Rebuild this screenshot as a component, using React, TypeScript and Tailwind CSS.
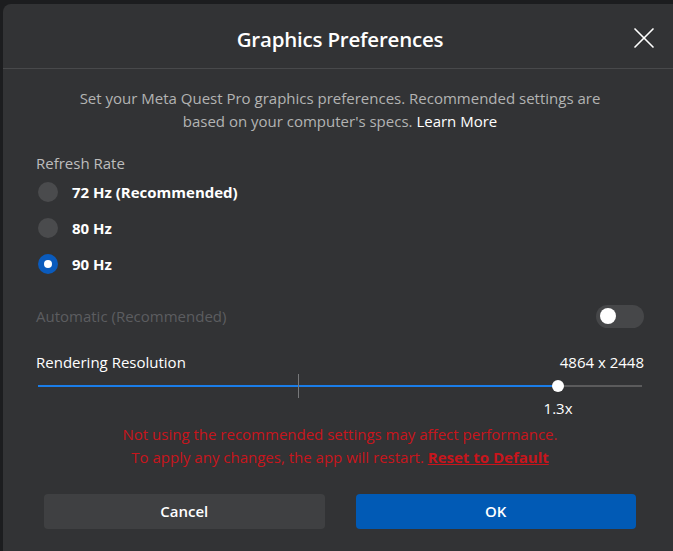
import { X } from "lucide-react";

const RATES = [
  { key: "72", label: "72 Hz (Recommended)" },
  { key: "80", label: "80 Hz" },
  { key: "90", label: "90 Hz" },
];

const font = { fontFamily: '"Open Sans", "Noto Sans", sans-serif' };

export default function App() {
  const selected = "90";
  const value = 0.861; // slider position
  const tick = 0.43;

  return (
    <div className="w-[673px] h-[551px] overflow-hidden bg-[#1c1d1f]" style={font}>
      <div className="ml-[3px] mt-[4px] w-[674px] h-[547px] rounded-tl-lg bg-[#323335] flex flex-col">
        {/* HEADER */}
        <div className="h-[65px] grid grid-cols-[1fr_auto_1fr] items-center border-b border-[#48494b] shrink-0">
          <div />
          <h1 className="text-[20.5px] font-semibold text-white tracking-[-0.2px] pt-[6px]">
            Graphics Preferences
          </h1>
          <div className="flex justify-end pr-[15px] pt-[4px]">
            <X className="w-[36px] h-[36px] text-white" strokeWidth={1.1} />
          </div>
        </div>

        {/* BODY */}
        <div className="px-[33px] flex flex-col">
          <p className="mt-[18px] text-center text-[15px] leading-[23px] text-[#b3b3b3]">
            Set your Meta Quest Pro graphics preferences. Recommended settings are
            <br />
            based on your computer's specs. <span className="text-white">Learn More</span>
          </p>

          <div className="mt-[20px] text-[15px] leading-[20px] text-[#bdbdbd]">Refresh Rate</div>

          <div className="mt-[1px] flex flex-col">
            {RATES.map((r) => (
              <div key={r.key} className="h-[36px] flex items-center gap-[14px] pl-[2px]">
                {selected === r.key ? (
                  <span className="w-[20px] h-[20px] rounded-full bg-[#0a5bbd] flex items-center justify-center">
                    <span className="w-[8px] h-[8px] rounded-full bg-white" />
                  </span>
                ) : (
                  <span className="w-[20px] h-[20px] rounded-full bg-[#4a4b4d]" />
                )}
                <span className="text-[15px] font-bold text-white">{r.label}</span>
              </div>
            ))}
          </div>

          {/* AUTOMATIC */}
          <div className="mt-[22px] h-[24px] flex items-center justify-between">
            <span className="text-[15px] text-[#5c5d60]">Automatic (Recommended)</span>
            <span className="w-[48px] h-[23px] rounded-full bg-[#464749] flex items-center pl-[4px]">
              <span className="w-[16px] h-[16px] rounded-full bg-white" />
            </span>
          </div>

          {/* RESOLUTION */}
          <div className="mt-[24px] h-[20px] flex items-center justify-between text-[15px] text-white">
            <span>Rendering Resolution</span>
            <span>4864 x 2448</span>
          </div>

          <div className="mt-[2px] h-[24px] px-[2px]">
            <div className="relative h-full">
              <div className="absolute left-0 right-0 top-[11px] h-[2px] bg-[#5b5b5c]" />
              <div
                className="absolute left-0 top-[11px] h-[2px] bg-[#1a7de8]"
                style={{ width: `${value * 100}%` }}
              />
              <div
                className="absolute top-0 w-px h-[24px] bg-[#77787a]"
                style={{ left: `${tick * 100}%` }}
              />
              <div
                className="absolute top-[6px] w-[12px] h-[12px] -ml-[6px] rounded-full bg-white"
                style={{ left: `${value * 100}%` }}
              />
            </div>
          </div>
          <div className="h-[20px] px-[2px]">
            <div className="relative h-full">
              <span
                className="absolute -translate-x-1/2 text-[15px] leading-[20px] text-white"
                style={{ left: `${value * 100}%` }}
              >
                1.3x
              </span>
            </div>
          </div>

          {/* WARNING */}
          <p className="mt-[5px] text-center text-[15px] leading-[23px] text-[#c8151c]">
            Not using the recommended settings may affect performance.
            <br />
            To apply any changes, the app will restart.{" "}
            <span className="font-bold underline">Reset to Default</span>
          </p>
        </div>

        {/* BUTTONS */}
        <div className="mt-[25px] px-[41px] grid grid-cols-2 gap-[31px]">
          <button className="h-[35px] rounded-[4px] bg-[#3f4042] text-white text-[15px] font-semibold">
            Cancel
          </button>
          <button className="h-[35px] rounded-[4px] bg-[#015ab5] text-white text-[15px] font-semibold">
            OK
          </button>
        </div>
      </div>
    </div>
  );
}
